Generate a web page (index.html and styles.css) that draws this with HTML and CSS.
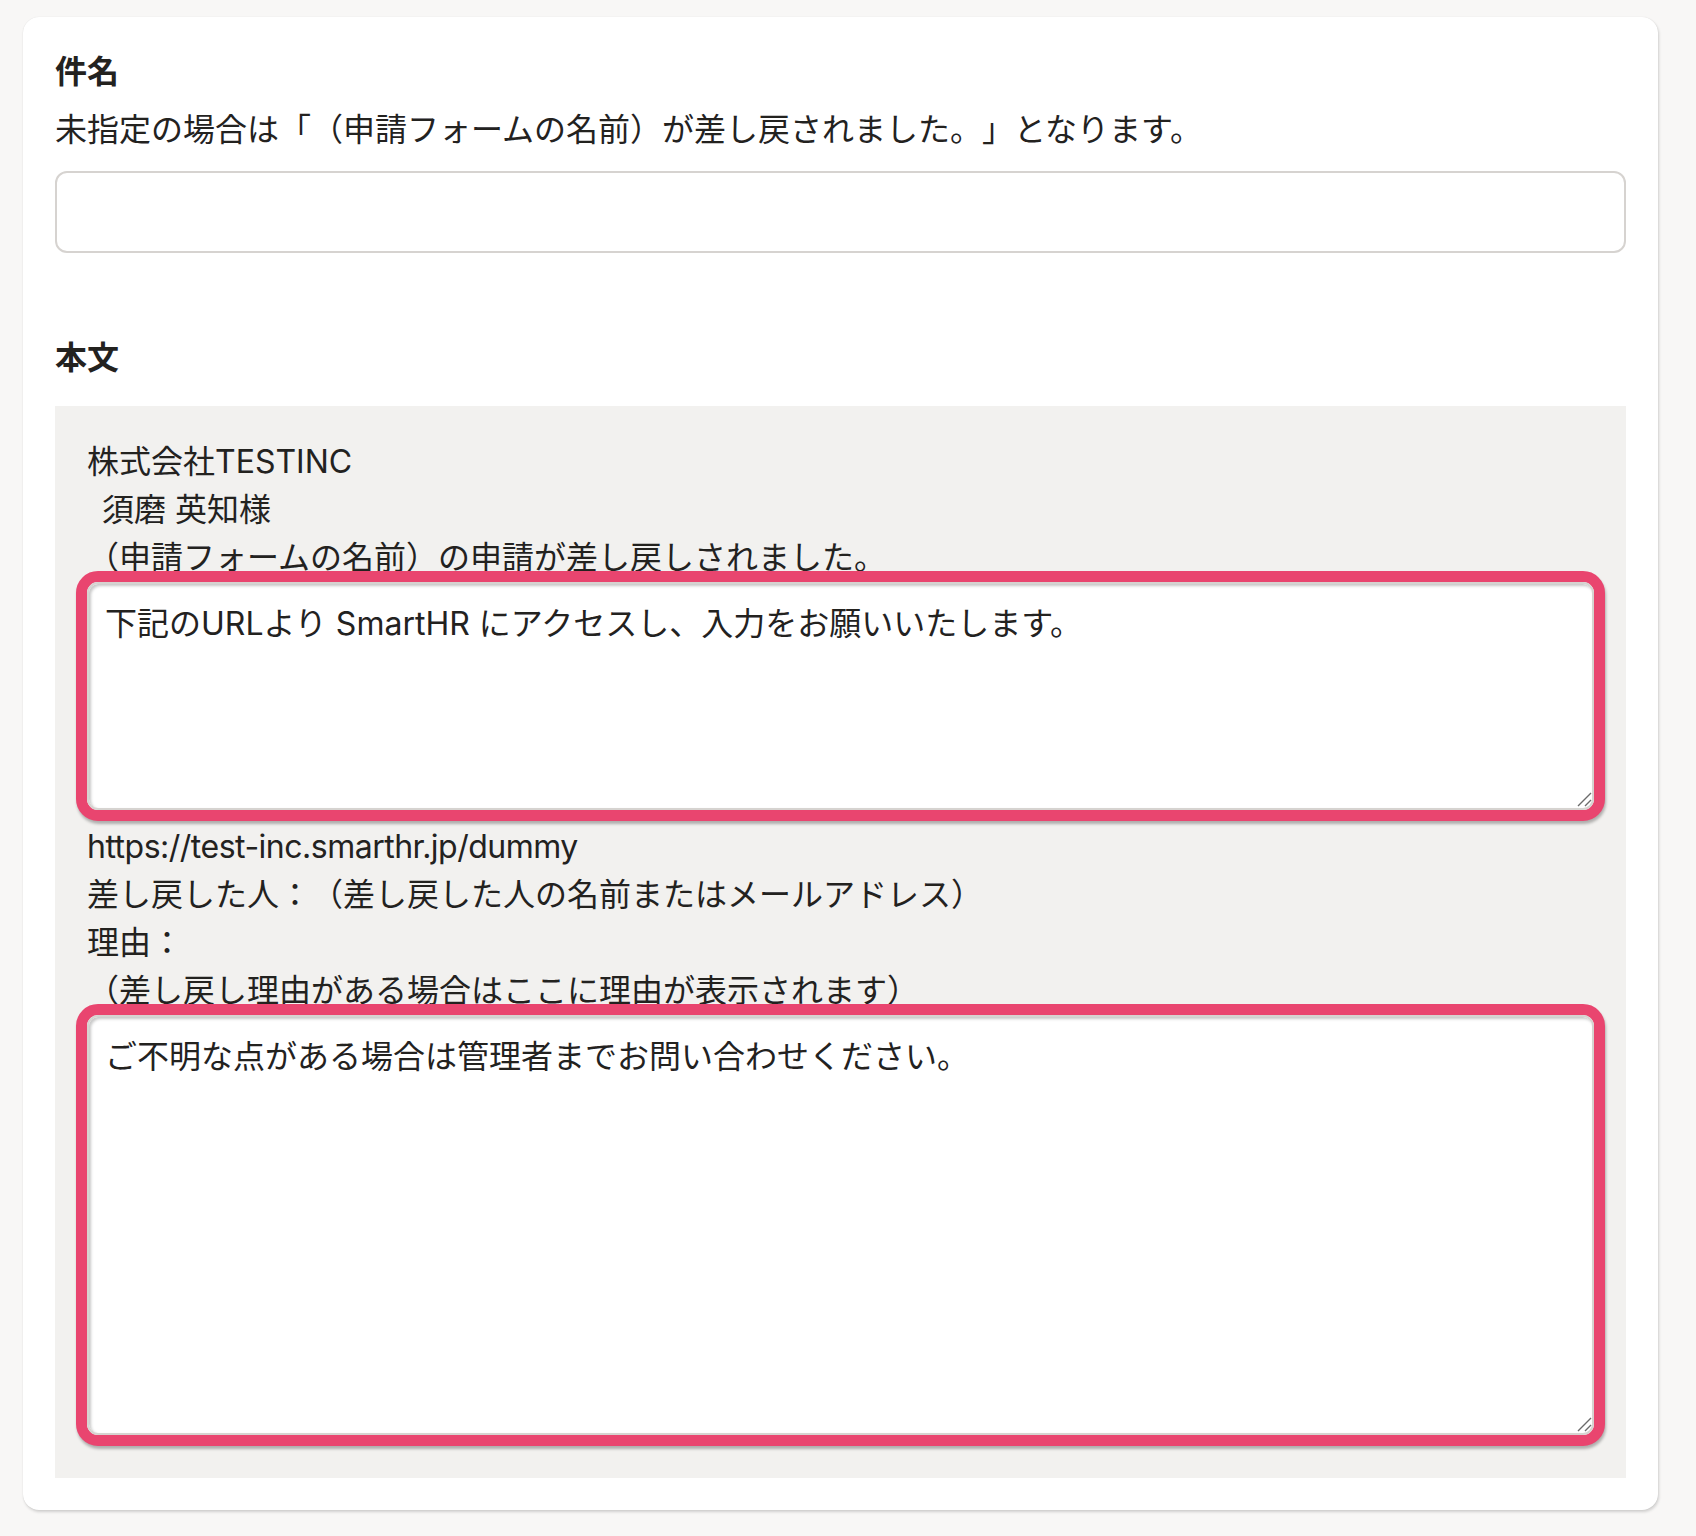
FILE: index.html
```html
<!DOCTYPE html>
<html lang="ja">
<head>
<meta charset="utf-8">
<title>差し戻しメール設定</title>
<link rel="stylesheet" href="styles.css">
</head>
<body>
  <div class="card">
    <section class="field">
      <h2 class="field-title">件名</h2>
      <p class="field-desc">未指定の場合は「（申請フォームの名前）が差し戻されました。」となります。</p>
      <input class="text-input" type="text" value="">
    </section>
    <section class="field field-body">
      <h2 class="field-title body-title">本文</h2>
      <div class="mail-preview">
        <div class="line">株式会社TESTINC</div>
        <div class="line indent">須磨 英知様</div>
        <div class="line">（申請フォームの名前）の申請が差し戻しされました。</div>
        <div class="highlight">
          <textarea class="mail-textarea short">下記のURLより SmartHR にアクセスし、入力をお願いいたします。</textarea>
          <svg class="grip" width="16" height="16" viewBox="0 0 16 16" aria-hidden="true"><path d="M2 15 L15 2 M9 15 L15 9" stroke="#6b6b6b" stroke-width="1.4" fill="none"/></svg>
        </div>
        <div class="line url">https://test-inc.smarthr.jp/dummy</div>
        <div class="line">差し戻した人：（差し戻した人の名前またはメールアドレス）</div>
        <div class="line">理由：</div>
        <div class="line">（差し戻し理由がある場合はここに理由が表示されます）</div>
        <div class="highlight">
          <textarea class="mail-textarea tall">ご不明な点がある場合は管理者までお問い合わせください。</textarea>
          <svg class="grip" width="16" height="16" viewBox="0 0 16 16" aria-hidden="true"><path d="M2 15 L15 2 M9 15 L15 9" stroke="#6b6b6b" stroke-width="1.4" fill="none"/></svg>
        </div>
      </div>
    </section>
  </div>
</body>
</html>
```

FILE: styles.css
```css
html, body {
  margin: 0;
  padding: 0;
}

body {
  background: #f8f7f6;
  font-family: Inter, "Noto Sans CJK JP", sans-serif;
  color: #23221f;
  padding: 17px 0 0 23px;
  min-height: 1536px;
  box-sizing: border-box;
  text-spacing-trim: space-all;
}

.card {
  width: 1635px;
  box-sizing: border-box;
  background: #ffffff;
  border-radius: 16px;
  padding: 32px;
  box-shadow: 1px 2px 3px rgba(0, 0, 0, 0.16), 0 0 1px rgba(0, 0, 0, 0.12);
}

.field-title {
  margin: 0 0 17px;
  font-family: "Noto Sans CJK JP", sans-serif;
  font-size: 32px;
  line-height: 40px;
  font-weight: 700;
}

.field-desc {
  margin: 0 0 17px;
  font-size: 32px;
  line-height: 48px;
}

.text-input {
  display: block;
  width: 100%;
  height: 82px;
  box-sizing: border-box;
  border: 2px solid #d6d3d0;
  border-radius: 12px;
  background: #ffffff;
  font: inherit;
  font-size: 32px;
  padding: 0 16px;
  outline: none;
}

.field-body {
  margin-top: 82px;
}

.body-title {
  margin-bottom: 31px;
}

.mail-preview {
  background: #f2f1ef;
  padding: 32px 32px 30px;
  font-size: 32px;
  line-height: 48px;
}

.line {
  white-space: pre;
}

.url {
  letter-spacing: -0.5px;
}

.indent {
  padding-left: 15px;
}

.highlight {
  position: relative;
  margin: -11px -11px 2px;
  border: 11px solid #e9456f;
  border-radius: 22px;
  box-shadow: 1px 3px 3px rgba(0, 0, 0, 0.28);
  background: #ffffff;
}

.mail-textarea {
  display: block;
  width: 100%;
  box-sizing: border-box;
  margin: 0;
  border: 2px solid #d6d3d0;
  border-radius: 11px;
  background: #ffffff;
  padding: 16px;
  font-family: Inter, "Noto Sans CJK JP", sans-serif;
  font-size: 32px;
  line-height: 48px;
  color: #23221f;
  resize: none;
  outline: none;
  text-spacing-trim: space-all;
  box-shadow: inset 2px 2px 3px rgba(0, 0, 0, 0.22);
}

.mail-textarea.short {
  height: 228px;
}

.mail-textarea.tall {
  height: 420px;
}

.grip {
  position: absolute;
  right: 2px;
  bottom: 3px;
}
```
